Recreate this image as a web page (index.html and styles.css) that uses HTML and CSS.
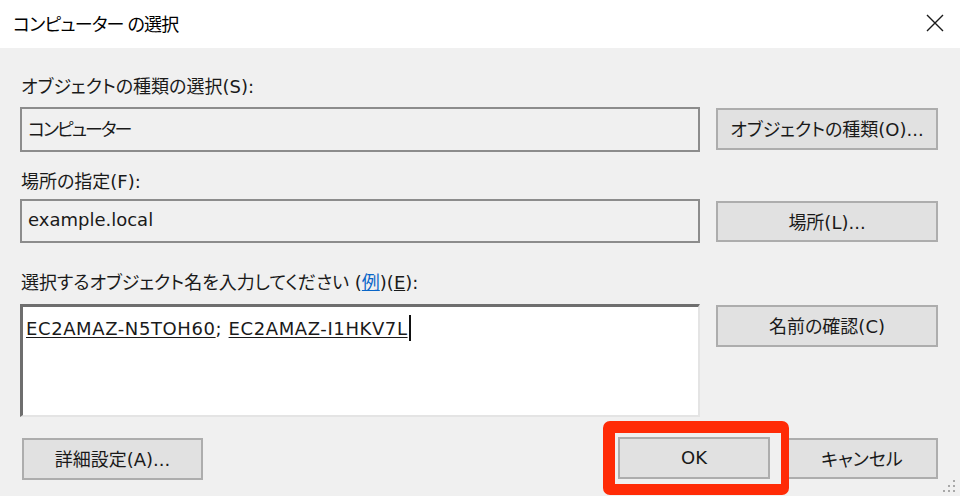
FILE: index.html
```html
<!DOCTYPE html>
<html lang="ja">
<head>
<meta charset="utf-8">
<title>コンピューター の選択</title>
<link rel="stylesheet" href="styles.css">
</head>
<body>
<div class="window">
  <header class="titlebar">
    <span class="title">コンピューター の選択</span>
    <svg class="close" width="18" height="18" viewBox="0 0 18 18" aria-label="閉じる">
      <path d="M1 1 L17 17 M17 1 L1 17" stroke="#1a1a1a" stroke-width="1.4" fill="none"/>
    </svg>
  </header>
  <main class="content">
    <div class="label label-first">オブジェクトの種類の選択(S):</div>
    <div class="row">
      <div class="field ro f1"><span class="kana">コンピューター</span></div>
      <button class="btn b1">オブジェクトの種類(O)...</button>
    </div>

    <div class="label label-second">場所の指定(F):</div>
    <div class="row">
      <div class="field ro f2">example.local</div>
      <button class="btn b2">場所(L)...</button>
    </div>

    <div class="label label-third">選択するオブジェクト名を入力してください (<span class="link">例</span>)(<u>E</u>):</div>
    <div class="row">
      <div class="field edit"><span class="name">EC2AMAZ-N5TOH60</span>; <span class="name">EC2AMAZ-I1HKV7L</span><span class="caret"></span></div>
      <button class="btn b3">名前の確認(C)</button>
    </div>

    <div class="actions">
      <button class="btn adv">詳細設定(A)...</button>
      <div class="right-group">
        <div class="highlight-wrap">
          <button class="btn ok">OK</button>
          <span class="highlight"></span>
        </div>
        <button class="btn cancel">キャンセル</button>
      </div>
    </div>
    <span class="grip">
      <i></i><i></i><i></i><i></i><i></i><i></i>
    </span>
  </main>
</div>
</body>
</html>
```

FILE: styles.css
```css
* { box-sizing: border-box; }

html, body {
  margin: 0;
  padding: 0;
  width: 960px;
  height: 496px;
  overflow: hidden;
}

body {
  font-family: "DejaVu Sans", "Noto Sans CJK JP", sans-serif;
  font-feature-settings: "palt";
  color: #1a1a1a;
  font-size: 18px;
  background: #f0f0f0;
}

.window {
  width: 960px;
  height: 496px;
  display: flex;
  flex-direction: column;
}

.titlebar {
  height: 48px;
  background: #ffffff;
  display: flex;
  align-items: center;
  justify-content: space-between;
  padding: 0 16px 3px 13px;
}

.title {
  font-family: "Noto Sans", "Noto Sans CJK JP", sans-serif;
  font-size: 18px;
  color: #000;
  letter-spacing: -0.8px;
}

.close { display: block; }

.content {
  position: relative;
  flex: 1;
  background: #f0f0f0;
  padding: 27px 22px 0 20px;
}

.label {
  height: 24px;
  line-height: 24px;
  padding-left: 1px;
  white-space: nowrap;
}

.label-first { margin-bottom: 8px; }
.label-second { margin-top: 18px; margin-bottom: 5px; }
.label-third { margin-top: 28px; margin-bottom: 9px; }

.link {
  color: #0a66c8;
  text-decoration: underline;
}

.row {
  display: flex;
  gap: 16px;
  align-items: flex-start;
}

.field {
  width: 680px;
  flex: none;
  white-space: nowrap;
}

.ro {
  border: 2px solid #8c8c8c;
  background: #f0f0f0;
  display: flex;
  align-items: center;
  padding: 0 6px 3px;
}

.kana { letter-spacing: -2px; }

.f1 { height: 45px; }
.f2 { height: 44px; }

.edit {
  height: 113px;
  background: #ffffff;
  border-style: solid;
  border-width: 3px 2px 2px 3px;
  border-color: #6e6e6e #e4e4e4 #e4e4e4 #6e6e6e;
  padding: 8px 3px 0 3px;
  line-height: 24px;
  letter-spacing: 0.6px;
}

.name {
  text-decoration: underline;
  text-underline-offset: 2px;
}

.caret {
  display: inline-block;
  width: 2px;
  height: 26px;
  background: #111;
  vertical-align: -6px;
  margin-left: 1px;
}

.btn {
  font: inherit;
  font-feature-settings: "palt";
  color: #1a1a1a;
  background: #e1e1e1;
  border: 2px solid #adadad;
  height: 42px;
  padding: 0 0 2px;
  margin: 0;
  display: flex;
  align-items: center;
  justify-content: center;
  white-space: nowrap;
}

.b1, .b2, .b3 {
  width: 222px;
  flex: none;
  margin-top: 1px;
}

.b2 { margin-top: 2px; height: 41px; }

.actions {
  margin-top: 20px;
  display: flex;
  justify-content: space-between;
  align-items: flex-start;
}

.adv {
  width: 181px;
  margin-left: 2px;
  margin-top: 1px;
}

.right-group {
  display: flex;
  gap: 16px;
}

.highlight-wrap {
  position: relative;
}

.ok { width: 152px; }
.cancel { width: 152px; margin-top: 1px; height: 41px; }

.highlight {
  position: absolute;
  left: -15px;
  top: -16px;
  right: -19px;
  bottom: -16px;
  border: 12px solid #ff2b06;
  border-right-width: 8px;
  border-bottom-width: 11px;
  border-radius: 7px;
  pointer-events: none;
}

.grip {
  position: absolute;
  right: 3px;
  bottom: 2px;
  width: 14px;
  height: 14px;
  display: grid;
  grid-template-columns: repeat(3, 2px);
  grid-template-rows: repeat(3, 2px);
  gap: 3px;
}

.grip i {
  display: block;
  width: 2px;
  height: 2px;
  background: #a8a8a8;
}
.grip i:nth-child(1) { grid-column: 3; grid-row: 1; }
.grip i:nth-child(2) { grid-column: 2; grid-row: 2; }
.grip i:nth-child(3) { grid-column: 3; grid-row: 2; }
.grip i:nth-child(4) { grid-column: 1; grid-row: 3; }
.grip i:nth-child(5) { grid-column: 2; grid-row: 3; }
.grip i:nth-child(6) { grid-column: 3; grid-row: 3; }
```
